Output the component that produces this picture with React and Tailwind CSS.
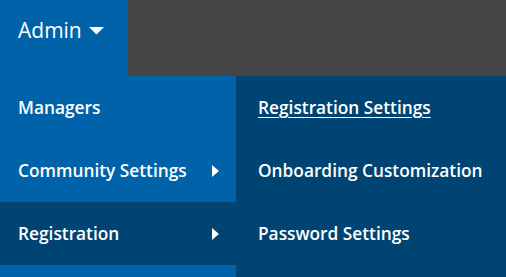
import React from "react";

const Caret = () => (
  <svg width="15" height="8" viewBox="0 0 15 8" className="ml-[7px]">
    <path d="M0 0 L15 0 L7.5 7.5 Z" fill="white" />
  </svg>
);

const Arrow = () => (
  <svg width="7" height="12" viewBox="0 0 7 12">
    <path d="M0 0 L7 6 L0 12 Z" fill="white" />
  </svg>
);

const menu = [
  { label: "Managers" },
  { label: "Community Settings", sub: true },
  { label: "Registration", sub: true, active: true },
];

const submenu = [
  { label: "Registration Settings", underline: true },
  { label: "Onboarding Customization" },
  { label: "Password Settings" },
];

export default function App() {
  return (
    <div
      className="w-[506px] h-[277px] overflow-hidden bg-[#444444] text-white"
      style={{ fontFamily: '"Open Sans", sans-serif' }}
    >
      {/* Top bar */}
      <div className="flex h-[76px]">
        <div className="w-[128px] bg-[#0062a8] flex items-center pl-[18px] pb-[14px]">
          <span className="text-[21px]">Admin</span>
          <Caret />
        </div>
        <div className="flex-1 bg-[#444444]" />
      </div>

      <div className="flex h-[201px]">
        {/* Left menu */}
        <div className="w-[236px] bg-[#0062a8] flex flex-col">
          {menu.map(item => (
            <div
              key={item.label}
              className={`h-[63px] shrink-0 flex items-center justify-between pl-[18px] pr-[17px] ${
                item.active ? "bg-[#004473]" : ""
              }`}
            >
              <span className="text-[17.3px] font-semibold">{item.label}</span>
              {item.sub && <Arrow />}
            </div>
          ))}
        </div>

        {/* Submenu */}
        <div className="flex-1 bg-[#004473] flex flex-col">
          {submenu.map(item => (
            <div key={item.label} className="h-[63px] shrink-0 flex items-center pl-[22px]">
              <span
                className={`text-[17.3px] font-semibold ${
                  item.underline ? "underline underline-offset-[3px] decoration-1" : ""
                }`}
              >
                {item.label}
              </span>
            </div>
          ))}
        </div>
      </div>
    </div>
  );
}
